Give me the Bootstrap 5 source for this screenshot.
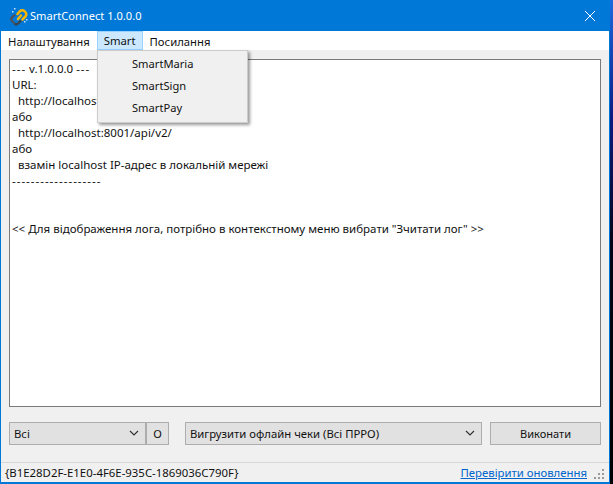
<!DOCTYPE html>
<html lang="uk"><head><meta charset="utf-8">
<link href="https://cdn.jsdelivr.net/npm/bootstrap@5.3.0/dist/css/bootstrap.min.css" rel="stylesheet">
<style>
html,body{margin:0;height:484px;overflow:hidden}
body{background:linear-gradient(#1a6ae0,#0a1a80 25%,#050518 50%,#000);font-family:"Noto Sans","Open Sans",sans-serif;font-size:11.5px;line-height:16px;color:#111}
.appwin{width:610px;height:484px;background:#f0f0f0;border:solid #0078d7;border-width:0 1px 2px 1px;position:relative}
.titlebar{height:31px;background:#0078d7;color:#fff;padding-left:8px;font-size:11.1px;gap:1px}
.closex{margin-left:auto;margin-right:14px;display:block}
.menubar{height:19px;background:#fff;font-size:11.3px}
.menuitem{padding:0 6px;height:19px;line-height:19px;border:1px solid transparent}
.menuitem.on{background:#cce8ff;border-color:#99d1ff;line-height:17px}
.logbox{margin:9px 8px 0 8px;height:348px;background:#fff;border:1px solid #7a7a7a;padding:1px 2px;white-space:pre;line-height:16px;font-size:11.5px;overflow:hidden}
.dashes{letter-spacing:1px}
.toolrow{margin:15px 8px 0 8px;height:23px}
.winsel{background:#e1e1e1;border:1px solid #adadad;height:23px;padding-left:4px;line-height:21px;font-size:11.3px}
.sel1{width:137px}.sel2{width:297px;margin-left:16px}
.okbtn{width:23px;text-align:center;padding:0}
.runbtn{width:111px;margin-left:8px;text-align:center;padding:0;font-size:11.05px}
.chev{margin-left:auto;margin-right:6px}
.statusbar{margin-top:17px;border-top:1px solid #d7d7d7;height:20px;padding:0 0 0 4px;line-height:20px;font-size:11.4px}
.updlink{margin-left:auto;color:#0066cc;text-decoration:underline;font-size:11.35px}
.grip{margin:5px 4px 0 6px;display:block}
.popmenu{position:absolute;left:96px;top:50px;width:151px;height:73px;background:#f0f0f0;border:1px solid #ccc;box-shadow:2px 2px 3px rgba(0,0,0,.4);padding-top:2px}
.popitem{height:22px;line-height:22px;padding-left:34px;font-size:11.15px}
</style></head><body>
<div class="appwin d-flex flex-column">
 <div class="titlebar d-flex align-items-center">
  <svg width="20" height="20" viewBox="0 0 20 20"><path d="M5.5 17.5L3 15a2.6 2.6 0 0 1 0-3.6L6 8.5" fill="none" stroke="#4a5560" stroke-width="2.4"/><path d="M5.5 17.5a2.6 2.6 0 0 0 3.6 0L12 14.5" fill="none" stroke="#39434d" stroke-width="2.4"/><path d="M8.5 8L11 5.2a3 3 0 0 1 4.4 0l1 1a3 3 0 0 1 0 4.3L13.5 13.5 M9 13l3-3.5" fill="none" stroke="#f7b500" stroke-width="2.6" stroke-linecap="round"/><g fill="#bfe3ff"><rect x="3" y="5" width="1.5" height="1.5"/><rect x="5" y="2" width="1.5" height="1.5"/><rect x="15" y="15" width="1.5" height="1.5"/><rect x="17" y="13" width="1.5" height="1.5"/></g></svg>
  <span>SmartConnect 1.0.0.0</span>
  <svg class="closex" width="10" height="10" viewBox="0 0 10 10"><path d="M0 0L10 10M10 0L0 10" stroke="#fff" stroke-width="1"/></svg>
 </div>
 <div class="menubar d-flex">
  <div class="menuitem">Налаштування</div><div class="menuitem on">Smart</div><div class="menuitem">Посилання</div>
 </div>
 <div class="logbox"><span class="dashes">---</span> v.1.0.0.0 <span class="dashes">---</span>
URL:
  http://localhost:8001/api/v1/
або
  http://localhost:8001/api/v2/
або
  взамін localhost IP-адрес в локальній мережі
<span class="dashes">-------------------</span>


&lt;&lt; Для відображення лога, потрібно в контекстному меню вибрати "Зчитати лог" &gt;&gt;</div>
 <div class="toolrow d-flex">
  <div class="winsel sel1 d-flex">Всі<svg class="chev" width="10" height="21" viewBox="0 0 10 21"><path d="M1 8l4 4 4-4" fill="none" stroke="#333" stroke-width="1.2"/></svg></div>
  <div class="winsel okbtn">О</div>
  <div class="winsel sel2 d-flex">Вигрузити офлайн чеки (Всі ПРРО)<svg class="chev" width="10" height="21" viewBox="0 0 10 21"><path d="M1 8l4 4 4-4" fill="none" stroke="#333" stroke-width="1.2"/></svg></div>
  <div class="winsel runbtn">Виконати</div>
 </div>
 <div class="statusbar d-flex">
  <span>{B1E28D2F-E1E0-4F6E-935C-1869036C790F}</span>
  <span class="updlink">Перевірити оновлення</span>
  <svg class="grip" width="12" height="12" viewBox="0 0 12 12" fill="#9a9a9a"><rect x="9" y="1" width="2" height="2"/><rect x="5" y="5" width="2" height="2"/><rect x="9" y="5" width="2" height="2"/><rect x="1" y="9" width="2" height="2"/><rect x="5" y="9" width="2" height="2"/><rect x="9" y="9" width="2" height="2"/></svg>
 </div>
 <div class="popmenu">
  <div class="popitem">SmartMaria</div><div class="popitem">SmartSign</div><div class="popitem">SmartPay</div>
 </div>
</div>
<script src="https://cdn.jsdelivr.net/npm/bootstrap@5.3.0/dist/js/bootstrap.bundle.min.js"></script>
</body></html>
